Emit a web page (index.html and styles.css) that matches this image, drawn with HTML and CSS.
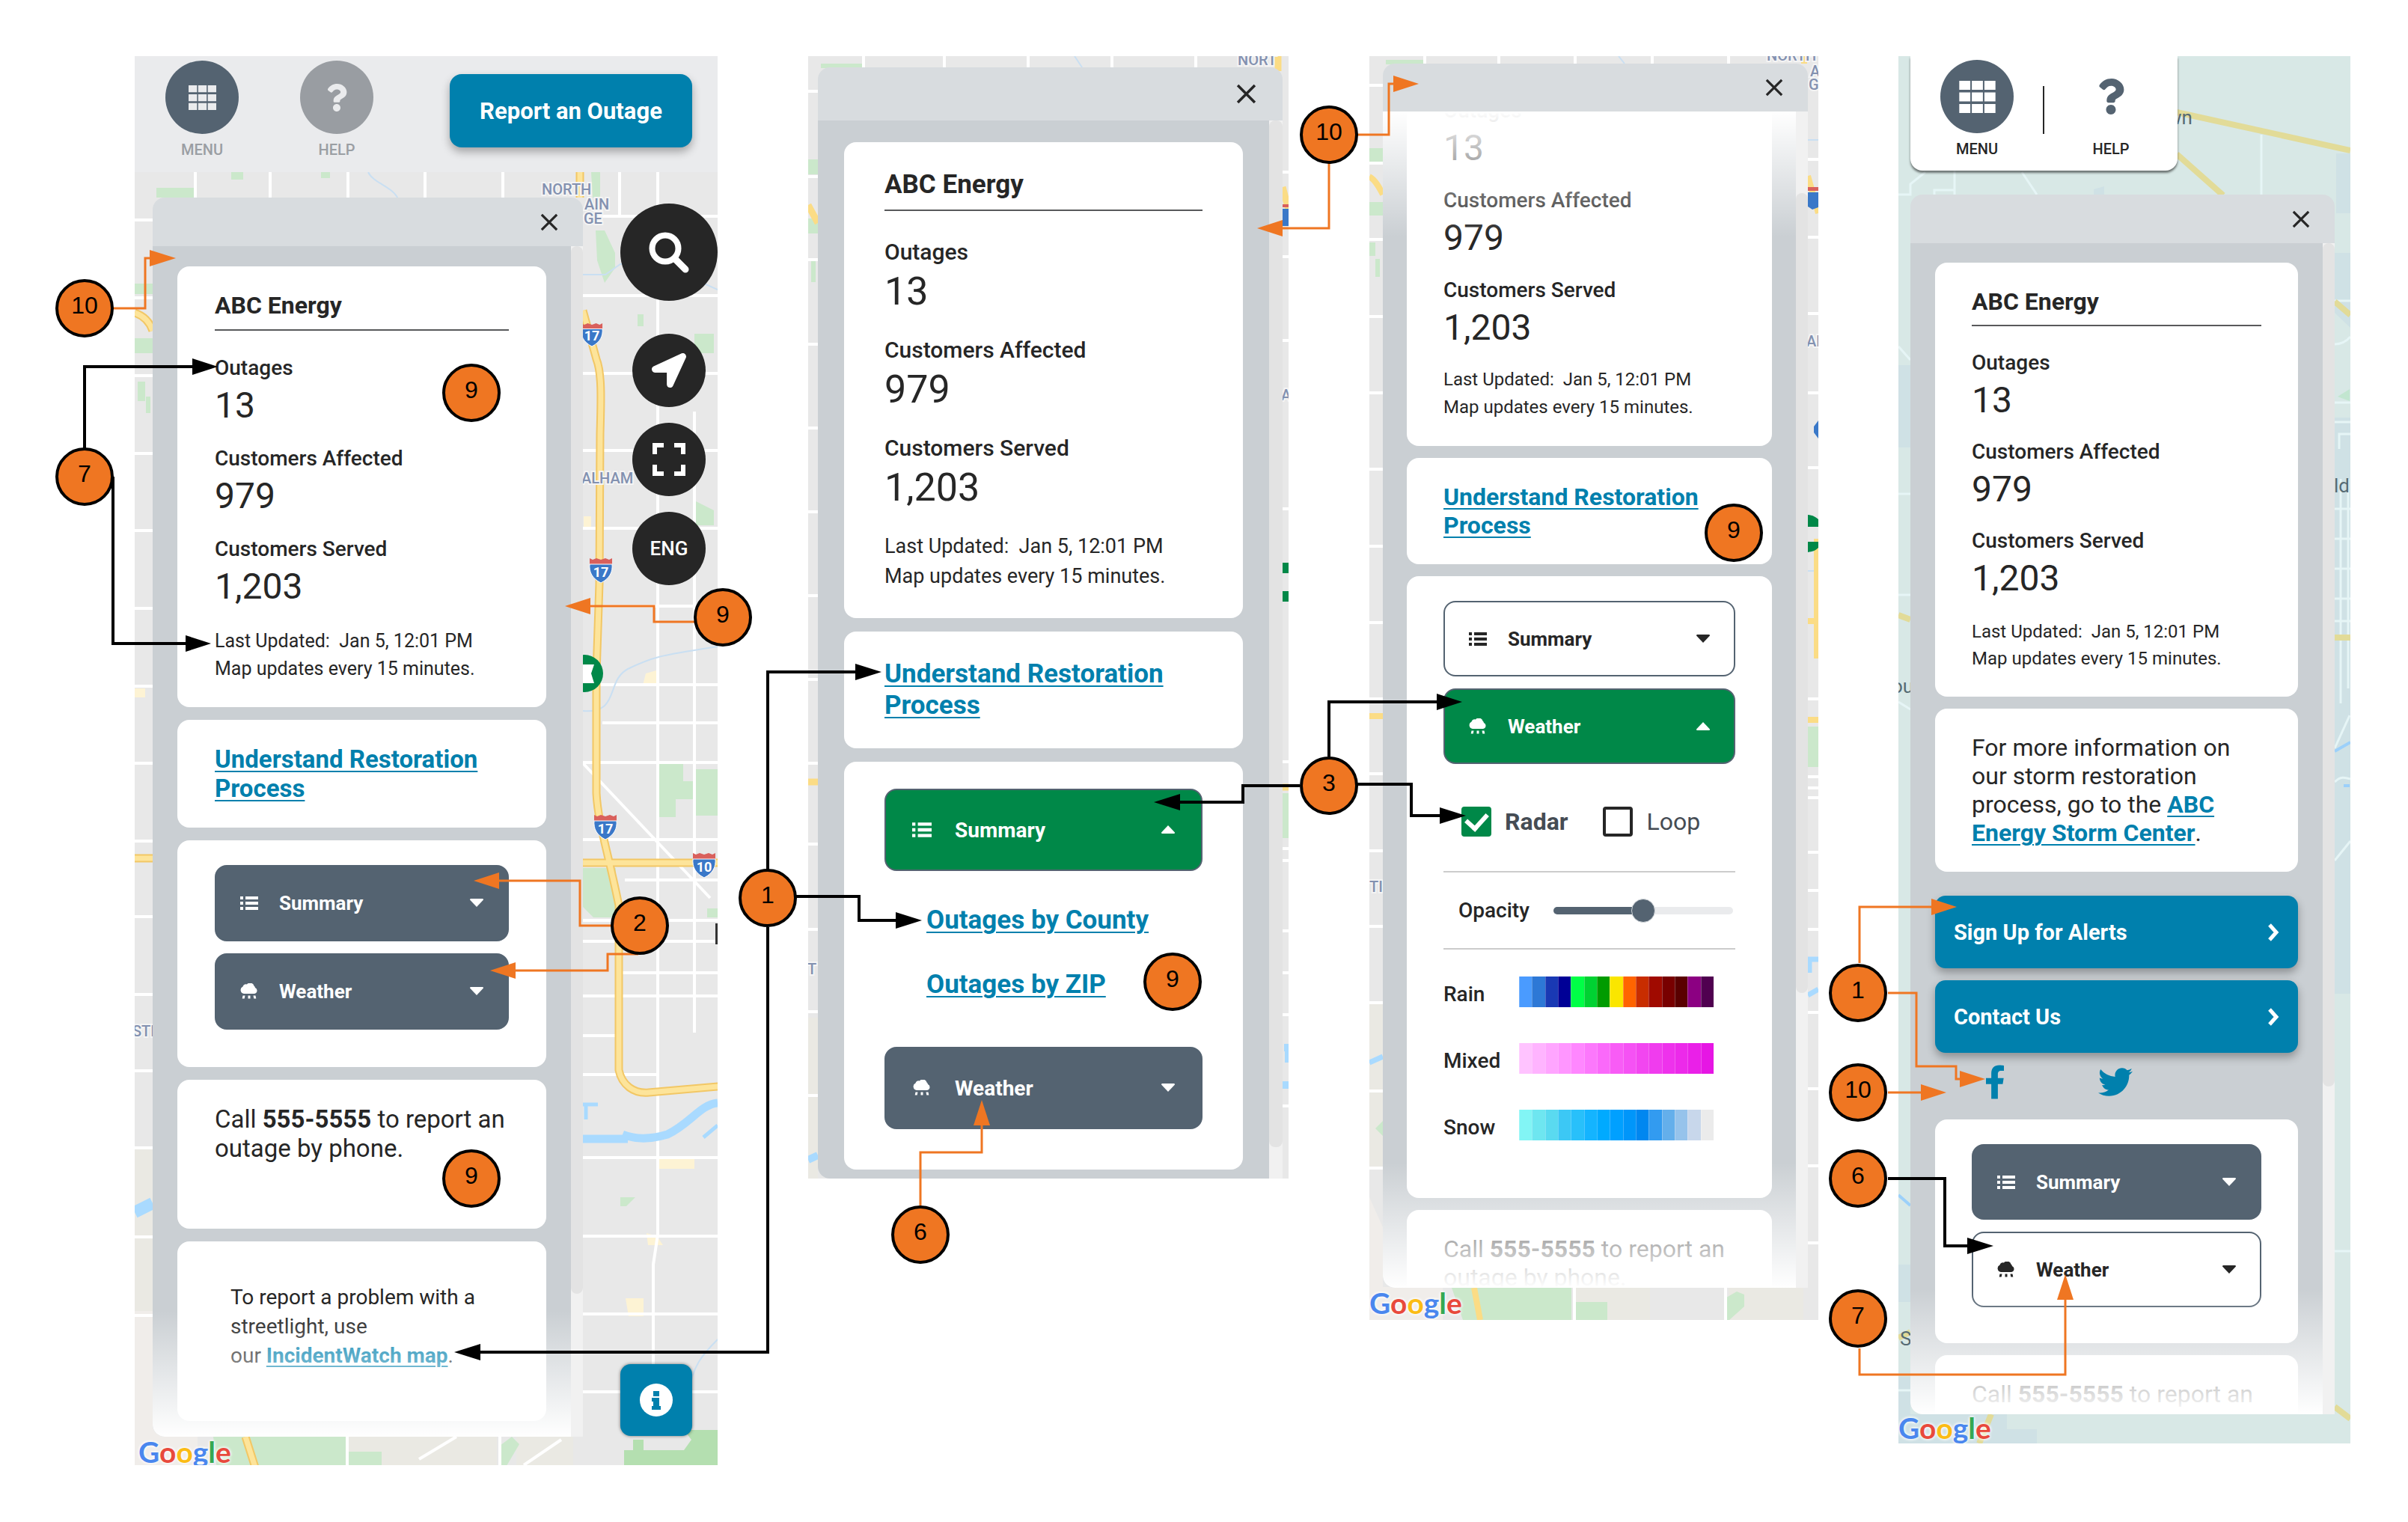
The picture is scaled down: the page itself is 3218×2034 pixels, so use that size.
FILE: index.html
```html
<!DOCTYPE html>
<html lang="en">
<head>
<meta charset="utf-8">
<meta name="viewport" content="width=device-width, initial-scale=1">
<title>Outage Map Menu Style Guide</title>
<link rel="stylesheet" href="styles.css">
</head>
<body>
<svg class="sprite" aria-hidden="true">
  <symbol id="i-grid" viewBox="0 0 36 32"><path d="M0 0h11v9H0zM12.500 0h11v9h-11zM25 0h11v9H25zM0 11.500h11v9H0zM12.500 11.500h11v9h-11zM25 11.500h11v9H25zM0 23h11v9H0zM12.500 23h11v9h-11zM25 23h11v9H25z"/></symbol>
  <symbol id="i-question" viewBox="0 0 384 512"><path d="M202.021 0C122.202 0 70.503 32.703 29.914 91.026c-7.363 10.58-5.093 25.086 5.178 32.874l43.138 32.709c10.373 7.865 25.132 6.026 33.253-4.148 25.049-31.381 43.63-49.449 82.757-49.449 30.764 0 68.816 19.799 68.816 49.631 0 22.552-18.617 34.134-48.993 51.164-35.423 19.86-82.299 44.576-82.299 106.405V320c0 13.255 10.745 24 24 24h72.471c13.255 0 24-10.745 24-24v-5.773c0-42.86 125.268-44.645 125.268-160.627C377.504 66.256 286.902 0 202.021 0zM192 373.459c-38.196 0-69.271 31.075-69.271 69.271 0 38.195 31.075 69.27 69.271 69.27s69.271-31.075 69.271-69.271-31.075-69.27-69.271-69.27z"/></symbol>
  <symbol id="i-close" viewBox="0 0 26 26"><path d="M2 2l22 22M24 2L2 24" fill="none" stroke="currentColor" stroke-width="3.400"/></symbol>
  <symbol id="i-search" viewBox="0 0 56 56"><circle cx="23" cy="23" r="17.500" fill="none" stroke="currentColor" stroke-width="8"/><path d="M36 37l14 14" fill="none" stroke="currentColor" stroke-width="9" stroke-linecap="round"/></symbol>
  <symbol id="i-arrow" viewBox="0 0 512 512"><path d="M444.52 3.52L28.74 195.42c-47.97 22.39-31.98 92.75 19.19 92.75h175.91v175.91c0 51.17 70.36 67.17 92.75 19.19l191.9-415.78c15.99-38.39-25.59-79.97-63.97-63.97z"/></symbol>
  <symbol id="i-expand" viewBox="0 0 44 44"><path d="M3 15V3h12M29 3h12v12M41 29v12H29M15 41H3V29" fill="none" stroke="currentColor" stroke-width="6"/></symbol>
  <symbol id="i-info" viewBox="0 0 44 44"><circle cx="22" cy="22" r="22"/><path d="M18 10h8v7h-8zM16 19h10v11h2v5H16v-5h2v-6h-2z" fill="#0080ad"/></symbol>
  <symbol id="i-list" viewBox="0 0 24 18"><path d="M0 0h4v4H0zM7 0h17v4H7zM0 7h4v4H0zM7 7h17v4H7zM0 14h4v4H0zM7 14h17v4H7z"/></symbol>
  <symbol id="i-rain" viewBox="0 0 24 22"><path d="M5 14a5 5 0 0 1-1.500-9.500A4.800 4.800 0 0 1 9 1.500a5.500 5.500 0 0 1 9.500 2A4.500 4.500 0 0 1 20 6a4.200 4.200 0 0 1-1 8z"/><path d="M3.500 16.500h3l-.8 4H2.700zM10.500 16.500h3v4h-3zM17.500 16.500h3l.8 4h-3z"/></symbol>
  <symbol id="i-down" viewBox="0 0 18 12"><path d="M0 1.500C0 .5.500 0 1.500 0h15c1 0 1.500.5 1.500 1.500L9 11z"/></symbol>
  <symbol id="i-up" viewBox="0 0 18 12"><path d="M0 9.500c0 1 .5 1.500 1.500 1.500h15c1 0 1.500-.5 1.500-1.500L9 0z"/></symbol>
  <symbol id="i-chevron" viewBox="0 0 16 26"><path d="M3 3l9 10-9 10" fill="none" stroke="currentColor" stroke-width="5"/></symbol>
  <symbol id="i-facebook" viewBox="0 0 320 512"><path d="M279.14 288l14.22-92.66h-88.91v-60.13c0-25.35 12.42-50.06 52.24-50.06h40.42V6.26S260.430 0 225.360 0c-73.22 0-121.08 44.38-121.08 124.72v70.62H22.89V288h81.39v224h100.17V288z"/></symbol>
  <symbol id="i-twitter" viewBox="0 0 512 512"><path d="M459.37 151.716c.325 4.548.325 9.097.325 13.645 0 138.72-105.583 298.558-298.558 298.558-59.452 0-114.68-17.219-161.137-47.106 8.447.974 16.568 1.299 25.34 1.299 49.055 0 94.213-16.568 130.274-44.832-46.132-.975-84.792-31.188-98.112-72.772 6.498.974 12.995 1.624 19.818 1.624 9.421 0 18.843-1.3 27.614-3.573-48.081-9.747-84.143-51.98-84.143-102.985v-1.299c13.969 7.797 30.214 12.67 47.431 13.319-28.264-18.843-46.781-51.005-46.781-87.391 0-19.492 5.197-37.36 14.294-52.954 51.655 63.675 129.3 105.258 216.365 109.807-1.624-7.797-2.599-15.918-2.599-24.04 0-57.828 46.782-104.934 104.934-104.934 30.213 0 57.502 12.67 76.67 33.137 23.715-4.548 46.456-13.32 66.599-25.34-7.798 24.366-24.366 44.833-46.132 57.827 21.117-2.273 41.584-8.122 60.426-16.243-14.292 20.791-32.161 39.308-52.628 54.253z"/></symbol>
  <symbol id="i-shield" viewBox="0 0 32 34"><path d="M1 1l4 2 5-2 6 2 6-2 5 2 4-2v8H1z" fill="#d9605c"/><path d="M1 9h30c1 10-3 19-15 25C4 28 0 19 1 9z" fill="#3a78c8" stroke="#fff" stroke-width="1"/></symbol>
</svg>

<main class="board">

  <!-- Default menu -->
  <section class="screen screen--default" aria-label="Menu, default state">
    <svg class="map" viewBox="180 75 779 1883" preserveAspectRatio="xMinYMin slice" aria-hidden="true">
      <rect x="180" y="75" width="779" height="1890" fill="#e8e8e8"/>
      <path d="M180 1534h24v310h60v120h-84z" fill="#f0edea"/>
      <path d="M180 1536h24v216h-24z" fill="#eae9e3"/>
      <path d="M464 1920h200v44H464zM690 1920h76v44h-76z" fill="#eae9e3"/>
      <path d="M209 251h52v13h-52zM309 230h16v10h-16zM429 230h12v8h-12zM180 452h24v20h-24zM180 379h24v14h-24zM184 510h10v26h-10zM195 530h6v22h-6zM285 1920h178v44H290zM464 1940h46v24h-46zM668 1964l0-32 16-12 10 10-20 34zM796 308l12 0 14 30 0 20-14 20-10-30zM852 420h8v16h-8zM928 446h26v26h-26zM930 670l24 12v20h-24zM879 1020h34v24h16v24h-26v24h-24zM930 1028h29v62h-29zM779 1160h44v66h-30l-14-14zM945 1214h14v12h-14zM790 230h12v34h-10zM829 1600h20l-12 12h-8z" fill="#cbe8cb"/>
      <path d="M914 1911h45v53H834v-26h12v-14h14v14h54l10-14z" fill="#b4dfb0"/>
      <path d="M863 900l14-4v20h-18zM836 1735h24v24h-20zM878 1546h50v16h-48zM864 1648l14 4 8 12h-20zM780 690h10v18h-10zM180 920h14v12h-14z" fill="#fdf3d4"/>
      <g fill="none" stroke="#fff" stroke-width="4">
        <path d="M261 230v34M361 230v34M465 230v34M568 230v34M672 230v34M828 230v60M879 230V1650l-6 40v140M928 550V1380M464 1920v44M668 1920v44"/>
        <path d="M779 289h180M779 395h180M779 499h180M779 602h180M779 706h180M779 810h180M779 915h180M805 966h154M779 1019h180M779 1122h180M835 1176h124M779 1230h180M779 1258h180M830 1300h129M779 1331h180M779 1384h50M779 1436h100M779 1547h180M779 1652h180M779 1756h180M779 1860h180"/>
        <path d="M180 294h24M180 398h24M180 502h24M180 606h24M180 709h24M180 813h24M180 917h24M180 1020h24M180 1124h24M180 1225h24M180 1329h24M180 1431h24M180 1534h24M180 1653h24M180 1758h24"/>
        <path d="M779 1020l170 180M560 1950l50-30M700 1958l50-34"/>
      </g>
      <g fill="none" stroke="#c9dff2" stroke-width="2">
        <path d="M492 230c6 14 34 20 40 36M779 367h30l20-14 50-2 80 36M779 950c50 4 30-40 60-56 40-20 60-20 120-30M959 1790c-20 20-34 36-38 70"/>
      </g>
      <g fill="none" stroke="#a9daff" stroke-width="11">
        <path d="M779 1522h60M832 1516c20 8 40 6 60 0 30-14 44-40 67-42"/><path d="M779 1476h20M783 1476v20M940 1520l19-16" stroke-width="5"/><path d="M180 1620l24-12" stroke-width="16"/>
      </g>
      <path d="M775 230v34M779 415l18 65c8 20 6 60 5 100l-1 200-4 120v160c2 40 16 80 30 150v220c4 20 20 32 40 30l93-8M779 1153h180M180 1147h24M328 1920l14 44M180 418c12 4 20 12 24 24" fill="none" stroke="#f2c765" stroke-width="11"/>
      <path d="M775 230v34M779 415l18 65c8 20 6 60 5 100l-1 200-4 120v160c2 40 16 80 30 150v220c4 20 20 32 40 30l93-8M779 1153h180M180 1147h24M328 1920l14 44M180 418c12 4 20 12 24 24" fill="none" stroke="#fde49a" stroke-width="7"/>
      <g class="map-label">
        <text x="724" y="260">NORTH</text><text x="781" y="280">AIN</text><text x="780" y="299">GE</text><text x="777" y="646">ALHAM</text><text x="177" y="1385">STI</text>
      </g>
      <g class="shield-label">
        <use href="#i-shield" x="776" y="430" width="30" height="34"/><text x="791" y="455">17</text>
        <use href="#i-shield" x="787" y="745" width="32" height="34"/><text x="803" y="771">17</text>
        <use href="#i-shield" x="793" y="1088" width="32" height="34"/><text x="809" y="1114">17</text>
        <use href="#i-shield" x="925" y="1139" width="32" height="34"/><text x="941" y="1165">10</text>
      </g>
      <circle cx="781" cy="900" r="25" fill="#008848"/><path d="M770 888h24l-4 12 4 13h-24z" fill="#fff"/>
      <path d="M956 1234h3v28h-3z" fill="#333"/>
    </svg>
    <nav class="topbar" aria-label="Main">
      <button class="nav-item"><span class="nav-disc"><svg width="37" height="33"><use href="#i-grid"/></svg></span>MENU</button>
      <button class="nav-item"><span class="nav-disc nav-disc--muted"><svg width="28" height="37"><use href="#i-question"/></svg></span>HELP</button>
      <button class="report">Report an Outage</button>
    </nav>
    <div class="stage">
      <section class="panel">
        <header class="panel-head"><button class="close" aria-label="Close"><svg><use href="#i-close"/></svg></button></header>
        <div class="panel-body">
          <div class="stack">
            <article class="card">
              <h2>ABC Energy</h2>
              <dl class="metrics">
                <div><dt>Outages</dt><dd>13</dd></div>
                <div><dt>Customers Affected</dt><dd>979</dd></div>
                <div><dt>Customers Served</dt><dd>1,203</dd></div>
              </dl>
              <p class="note">Last Updated:&nbsp; Jan 5, 12:01 PM<br>Map updates every 15 minutes.</p>
            </article>
            <article class="card"><p class="copy"><a href="#restoration">Understand Restoration Process</a></p></article>
            <article class="card accordion">
              <button class="toggle"><svg class="toggle-icon"><use href="#i-list"/></svg>Summary<svg class="caret"><use href="#i-down"/></svg></button>
              <button class="toggle"><svg class="toggle-icon"><use href="#i-rain"/></svg>Weather<svg class="caret"><use href="#i-down"/></svg></button>
            </article>
            <article class="card card--phone"><p class="copy">Call <b>555-5555</b> to report an outage by phone.</p></article>
            <article class="card card--light"><p class="small-copy">To report a problem with a streetlight, use<br>our <a href="#incident">IncidentWatch map</a>.</p></article>
          </div>
          <div class="track"><div class="thumb thumb--a"></div></div>
          <div class="fade fade--bottom"></div>
        </div>
      </section>
      <div class="controls">
        <button class="round round--big" aria-label="Search"><svg width="56" height="56"><use href="#i-search"/></svg></button>
        <button class="round" aria-label="My location"><svg width="46" height="46"><use href="#i-arrow"/></svg></button>
        <button class="round" aria-label="Full screen"><svg width="44" height="44"><use href="#i-expand"/></svg></button>
        <button class="round">ENG</button>
        <button class="info" aria-label="Information"><svg width="44" height="44"><use href="#i-info"/></svg></button>
      </div>
    </div>
    <footer class="credit"><span class="g-b">G</span><span class="g-r">o</span><span class="g-y">o</span><span class="g-b">g</span><span class="g-g">l</span><span class="g-r">e</span></footer>
  </section>

  <!-- Summary expanded -->
  <section class="screen screen--summary" aria-label="Menu, summary expanded">
    <svg class="map" viewBox="1080 75 642 1501" preserveAspectRatio="xMinYMin slice" aria-hidden="true">
      <rect x="1080" y="75" width="642" height="1510" fill="#e8e8e8"/>
      <path d="M1080 1360h13v224h-13z" fill="#eae9e3"/>
      <path d="M1097 85h56v6h-56zM1080 213h13v20h-13zM1080 292h13v20h-13zM1714 1060h8v60h-8zM1084 345h6v32h-6z" fill="#cbe8cb"/>
      <g fill="none" stroke="#fff" stroke-width="4"><path d="M1154 75v15M1262 75v15M1374 75v15M1486 75v15M1598 75v15M1080 122h13M1080 236h13M1080 347h13M1080 460h13M1080 572h13M1080 684h13M1080 796h13M1080 908h13M1080 1020h13M1080 1128h13M1080 1242h13M1080 1352h13M1080 1464h13M1714 230h8M1714 343h8M1714 455h8M1714 524h8M1714 680h8M1714 1018h8M1714 1134h8M1714 1150h8M1714 1244h8M1714 1300h8M1714 1356h8M1714 1478h8"/></g>
      <path d="M1436 75l10 15" stroke="#c9dff2" stroke-width="2"/>
      <path d="M1080 274l13 24M1080 1045h13M1708 75v20M1714 250l8 30M1714 1052h8" stroke="#fbdc85" stroke-width="9" fill="none"/>
      <path d="M1714 273h8v4h-8z" fill="#d9605c"/><path d="M1714 279h8v23h-8z" fill="#3a78c8"/>
      <path d="M1714 752h8v14h-8zM1714 790h8v14h-8z" fill="#008848"/>
      <path d="M1716 1400h6v20M1714 1450h8M1080 1550l13-6" stroke="#a9daff" stroke-width="10" fill="none"/>
      <g class="map-label"><text x="1654" y="87">NORT</text><text x="1712" y="535">A</text><text x="1079" y="1302">T</text></g>
    </svg>
    <section class="panel panel--large">
      <header class="panel-head"><button class="close" aria-label="Close"><svg><use href="#i-close"/></svg></button></header>
      <div class="panel-body">
        <div class="stack">
          <article class="card">
            <h2>ABC Energy</h2>
            <dl class="metrics">
              <div><dt>Outages</dt><dd>13</dd></div>
              <div><dt>Customers Affected</dt><dd>979</dd></div>
              <div><dt>Customers Served</dt><dd>1,203</dd></div>
            </dl>
            <p class="note">Last Updated:&nbsp; Jan 5, 12:01 PM<br>Map updates every 15 minutes.</p>
          </article>
          <article class="card"><p class="copy"><a href="#restoration">Understand Restoration Process</a></p></article>
          <article class="card accordion">
            <button class="toggle toggle--open"><svg class="toggle-icon"><use href="#i-list"/></svg>Summary<svg class="caret"><use href="#i-up"/></svg></button>
            <ul class="sublinks"><li><a href="#county">Outages by County</a></li><li><a href="#zip">Outages by ZIP</a></li></ul>
            <button class="toggle"><svg class="toggle-icon"><use href="#i-rain"/></svg>Weather<svg class="caret"><use href="#i-down"/></svg></button>
          </article>
        </div>
        <div class="track"><div class="thumb thumb--b"></div></div>
      </div>
    </section>
  </section>

  <!-- Weather expanded -->
  <section class="screen screen--weather" aria-label="Menu, weather expanded">
    <svg class="map" viewBox="1830 75 600 1689" preserveAspectRatio="xMinYMin slice" aria-hidden="true">
      <rect x="1830" y="75" width="600" height="1694" fill="#e8e8e8"/>
      <path d="M1830 1340h18v220h-18zM2105 1720h100v44h-100zM2310 1720h100v44h-100z" fill="#eae9e3"/>
      <path d="M1830 1600l18 40v80h80v44h-98z" fill="#f0edea"/>
      <path d="M1852 80h50v6h-50zM1830 198h18v18h-18zM1830 270h18v18h-18zM1830 324h8v18h-8zM1838 346h6v24h-6zM1940 1721h160v43H1955zM2105 1740h43v24h-43zM2307 1764v-30l14-8 10 4v16l-20 18zM2416 971h14v54h-14zM1838 1508l10-10v20z" fill="#cbe8cb"/>
      <g fill="none" stroke="#fff" stroke-width="4"><path d="M1904 75v10M2003 75v10M2105 75v10M2208 75v10M2310 75v10M2104 1721v43M2306 1721v43M1830 114h18M1830 218h18M1830 320h18M1830 423h18M1830 525h18M1830 627h18M1830 730h18M1830 832h18M1830 934h18M1830 1034h18M1830 1137h18M1830 1238h18M1830 1340h18M1830 1458h18M1830 1561h18M2416 213h14M2416 317h14M2416 419h14M2416 525h14M2416 625h14M2416 934h14M2416 1038h14M2416 1053h14M2416 1066h14M2416 1139h14M2416 1190h14M2416 1242h14M2416 1353h14M2416 1455h14M2416 1558h14M2416 1661h14"/></g>
      <path d="M2163 75l8 10M2416 187h14M2416 763h14" stroke="#c9dff2" stroke-width="2"/>
      <path d="M1830 236c8 4 14 16 18 24M1830 957h18M2411 75v10M2416 235l14 50M2416 830l12 0v50M2428 720v110M2416 962h14M1970 1721l8 43" stroke="#fbdc85" stroke-width="8" fill="none"/>
      <path d="M2416 250h14v5h-14z" fill="#d9605c"/><path d="M2416 257h14v20l-8 3-6-4z" fill="#3a78c8"/><path d="M2424 570l6-8v24l-6-8z" fill="#3a78c8"/>
      <path d="M2416 688c6 0 12 4 14 6v10h-14zM2416 724h14v8c-4 4-8 5-14 6z" fill="#008848"/>
      <path d="M2418 1300v-18h12M2416 1330l14-8M1830 1420l18-8" stroke="#a9daff" stroke-width="7" fill="none"/>
      <g class="map-label"><text x="2361" y="81">NORTH</text><text x="2419" y="102">A</text><text x="2417" y="120">G</text><text x="2414" y="463">AL</text><text x="1830" y="1192">TI</text></g>
    </svg>
    <section class="panel panel--weather">
      <header class="panel-head"><button class="close" aria-label="Close"><svg><use href="#i-close"/></svg></button></header>
      <div class="panel-body">
        <div class="stack">
          <article class="card">
            <dl class="metrics">
              <div><dt>Outages</dt><dd>13</dd></div>
              <div><dt>Customers Affected</dt><dd>979</dd></div>
              <div><dt>Customers Served</dt><dd>1,203</dd></div>
            </dl>
            <p class="note">Last Updated:&nbsp; Jan 5, 12:01 PM<br>Map updates every 15 minutes.</p>
          </article>
          <article class="card"><p class="copy"><a href="#restoration">Understand Restoration Process</a></p></article>
          <article class="card accordion accordion--weather">
            <button class="toggle toggle--outline"><svg class="toggle-icon"><use href="#i-list"/></svg>Summary<svg class="caret"><use href="#i-down"/></svg></button>
            <button class="toggle toggle--open"><svg class="toggle-icon"><use href="#i-rain"/></svg>Weather<svg class="caret"><use href="#i-up"/></svg></button>
            <div class="checks">
              <label class="check check--on"><input type="checkbox" checked>Radar</label>
              <label class="check"><input type="checkbox">Loop</label>
            </div>
            <div class="opacity"><label for="opacity">Opacity</label><input id="opacity" type="range" min="0" max="100" value="50"></div>
            <dl class="legend">
              <div><dt>Rain</dt><dd><i style="background:#4a9bff"></i><i style="background:#2d78d6"></i><i style="background:#1939b4"></i><i style="background:#000096"></i><i style="background:#00ff46"></i><i style="background:#00d232"></i><i style="background:#009b00"></i><i style="background:#fae600"></i><i style="background:#ff6400"></i><i style="background:#c82d00"></i><i style="background:#a00a00"></i><i style="background:#780000"></i><i style="background:#5a0000"></i><i style="background:#8c0082"></i><i style="background:#500050"></i></dd></div>
              <div><dt>Mixed</dt><dd><i style="background:#ffc3ff"></i><i style="background:#ffb4ff"></i><i style="background:#ffa5ff"></i><i style="background:#ff96ff"></i><i style="background:#ff87ff"></i><i style="background:#fc78fc"></i><i style="background:#fa69fa"></i><i style="background:#f85cf6"></i><i style="background:#f552f4"></i><i style="background:#f246f0"></i><i style="background:#f03cee"></i><i style="background:#ee32ec"></i><i style="background:#ec2aea"></i><i style="background:#ea20e8"></i><i style="background:#e616e4"></i></dd></div>
              <div><dt>Snow</dt><dd><i style="background:#82f5f5"></i><i style="background:#6ee6f0"></i><i style="background:#5adaf0"></i><i style="background:#3cc8f5"></i><i style="background:#28c0fa"></i><i style="background:#14b4ff"></i><i style="background:#00aaff"></i><i style="background:#00a0ff"></i><i style="background:#0096fa"></i><i style="background:#0087f0"></i><i style="background:#329bf0"></i><i style="background:#64afeb"></i><i style="background:#96c3eb"></i><i style="background:#c8d7eb"></i><i style="background:#ebebeb"></i></dd></div>
            </dl>
          </article>
          <article class="card card--phone"><p class="copy">Call <b>555-5555</b> to report an outage by phone.</p></article>
        </div>
        <div class="track"><div class="thumb thumb--c"></div></div>
        <div class="fade fade--top"></div>
        <div class="fade fade--bottom"></div>
      </div>
    </section>
    <footer class="credit credit--flush"><span class="g-b">G</span><span class="g-r">o</span><span class="g-y">o</span><span class="g-b">g</span><span class="g-g">l</span><span class="g-r">e</span></footer>
  </section>

  <!-- Alerts and contact -->
  <section class="screen screen--alerts" aria-label="Menu, with alerts and contact buttons">
    <svg class="map" viewBox="2537 75 604 1854" preserveAspectRatio="xMinYMin slice" aria-hidden="true">
      <rect x="2537" y="75" width="604" height="1860" fill="#d8e8e6"/>
      <path d="M2537 488h16v110h-16zM3122 205h19v80h-19zM3120 338h21v100l-21-20zM3120 558h21v770h-21zM2798 253l14-4v12h-14zM2537 1690h16v50h-16zM2537 1840h16v50h75v39h-91zM2682 1890v20h40v19h-94v-39z" fill="#cfe1e5"/>
      <path d="M3124 530l16-10v16z" fill="#c2e6d0"/>
      <g fill="none" stroke="#e6f5f6" stroke-width="3"><path d="M2537 260h16l0-14 20-16M2612 228v32M2585 260v-6h26M2702 230l20 30M3022 180v80M3120 402h21M3120 538h21M3120 460c10 0 16-4 21-10M2537 463l16 18M2537 660h16M2537 795h16M3120 680h21M3120 720h21M3120 760h21M3120 800h21M3120 830h21M3128 640v300M3138 640v280M2537 938l16 10M3120 1000l20-44M3120 1045c8-8 14-6 21-4M3120 1150l21-26M3120 564h21M3126 600v-20h15M3120 1672h21M2537 1858h16"/></g>
      <g fill="none" stroke="#e2db98" stroke-width="8"><path d="M2909 150l232 51M2909 206l62 55M3120 403l21 18M2537 822l16 6M3120 852h21M2537 1788l16-8M2661 1890l-16 39M3120 1880l21 16"/></g>
      <g fill="none" stroke="#9cd0fa" stroke-width="4"><path d="M3120 1004l21-12M3132 1050l8 0M2537 1597l16 14"/></g>
      <g class="place-label"><text x="2896" y="166">wn</text><text x="3119" y="658">ld</text><text x="2528" y="926">ou</text><text x="2539" y="1798">S</text></g>
    </svg>
    <nav class="menu-card" aria-label="Main">
      <button class="nav-item nav-item--dark"><span class="nav-disc"><svg width="49" height="43"><use href="#i-grid"/></svg></span>MENU</button>
      <button class="nav-item nav-item--dark"><span class="nav-disc nav-disc--plain"><svg width="36" height="48"><use href="#i-question"/></svg></span>HELP</button>
    </nav>
    <section class="panel panel--alerts">
      <header class="panel-head"><button class="close" aria-label="Close"><svg><use href="#i-close"/></svg></button></header>
      <div class="panel-body">
        <div class="stack">
          <article class="card">
            <h2>ABC Energy</h2>
            <dl class="metrics">
              <div><dt>Outages</dt><dd>13</dd></div>
              <div><dt>Customers Affected</dt><dd>979</dd></div>
              <div><dt>Customers Served</dt><dd>1,203</dd></div>
            </dl>
            <p class="note">Last Updated:&nbsp; Jan 5, 12:01 PM<br>Map updates every 15 minutes.</p>
          </article>
          <article class="card"><p class="copy">For more information on our storm restoration process, go to the <a href="#storm">ABC Energy Storm Center</a>.</p></article>
          <div class="actions">
            <button class="action">Sign Up for Alerts<svg width="16" height="26"><use href="#i-chevron"/></svg></button>
            <button class="action">Contact Us<svg width="16" height="26"><use href="#i-chevron"/></svg></button>
            <div class="social">
              <a href="#facebook" aria-label="Facebook"><svg width="28" height="46"><use href="#i-facebook"/></svg></a>
              <a href="#twitter" aria-label="Twitter"><svg width="46" height="46"><use href="#i-twitter"/></svg></a>
            </div>
          </div>
          <article class="card accordion">
            <button class="toggle"><svg class="toggle-icon"><use href="#i-list"/></svg>Summary<svg class="caret"><use href="#i-down"/></svg></button>
            <button class="toggle toggle--outline"><svg class="toggle-icon"><use href="#i-rain"/></svg>Weather<svg class="caret"><use href="#i-down"/></svg></button>
          </article>
          <article class="card card--phone"><p class="copy">Call <b>555-5555</b> to report an</p></article>
        </div>
        <div class="track"><div class="thumb thumb--d"></div></div>
        <div class="fade fade--bottom"></div>
      </div>
    </section>
    <footer class="credit credit--flush"><span class="g-b">G</span><span class="g-r">o</span><span class="g-y">o</span><span class="g-b">g</span><span class="g-g">l</span><span class="g-r">e</span></footer>
  </section>

  <!-- Numbered callouts and connectors -->
  <svg class="callouts" viewBox="0 0 3218 2034" role="img" aria-label="Numbered callouts">
    <g class="wire wire--orange">
      <path d="M150 412h44v-67h8"/><path d="M928 831h-54v-21h-88"/><path d="M816 1237h-41v-60H665"/><path d="M853 1275h-41v22H687"/>
      <path d="M1230 1611v-71h82v-38"/><path d="M1814 180h42v-68h8"/><path d="M1776 218v87h-64"/>
      <path d="M2485 1287v-75h99"/><path d="M2523 1327h38v98h53v17h6"/><path d="M2523 1460h46"/><path d="M2485 1802v35h275v-103"/>
    </g>
    <g class="wire wire--black">
      <path d="M113 600V490h146"/><path d="M151 637v223h99"/><path d="M1026 1162V898h120"/><path d="M1064 1198h84v32h52"/><path d="M1026 1239v568H641"/>
      <path d="M1737 1050h-76v22h-86"/><path d="M1776 1011v-73h146"/><path d="M1814 1048h72v42h40"/><path d="M2523 1575h76v90h32"/>
    </g>
    <g class="tip tip--orange">
      <path d="M235 345l-35-11v22z"/><path d="M755 810l34-11v22z"/><path d="M633 1177l34-11v22z"/><path d="M655 1297l34-11v22z"/><path d="M1312 1470l-11 34h22z"/><path d="M1896 112l-34-11v22z"/><path d="M1680 305l34-11v22z"/><path d="M2615 1212l-34-11v22z"/><path d="M2653 1442l-34-11v22z"/><path d="M2601 1460l-34-11v22z"/><path d="M2760 1703l-11 34h22z"/>
    </g>
    <g class="tip tip--black">
      <path d="M291 490l-34-11v22z"/><path d="M282 860l-34-11v22z"/><path d="M1178 898l-35-11v22z"/><path d="M1232 1230l-35-11v22z"/><path d="M607 1807l35-11v22z"/><path d="M1542 1072l35-11v22z"/><path d="M1954 938l-34-11v22z"/><path d="M1959 1090l-35-11v22z"/><path d="M2664 1665l-35-11v22z"/>
    </g>
    <g class="badge">
      <circle cx="113" cy="412" r="37"/><text x="113" y="419">10</text>
      <circle cx="113" cy="637" r="37"/><text x="113" y="644">7</text>
      <circle cx="630" cy="525" r="37"/><text x="630" y="532">9</text>
      <circle cx="966" cy="825" r="37"/><text x="966" y="832">9</text>
      <circle cx="855" cy="1237" r="37"/><text x="855" y="1244">2</text>
      <circle cx="630" cy="1575" r="37"/><text x="630" y="1582">9</text>
      <circle cx="1026" cy="1200" r="37"/><text x="1026" y="1207">1</text>
      <circle cx="1567" cy="1312" r="37"/><text x="1567" y="1319">9</text>
      <circle cx="1230" cy="1650" r="37"/><text x="1230" y="1657">6</text>
      <circle cx="1776" cy="180" r="37"/><text x="1776" y="187">10</text>
      <circle cx="1776" cy="1050" r="37"/><text x="1776" y="1057">3</text>
      <circle cx="2317" cy="712" r="37"/><text x="2317" y="719">9</text>
      <circle cx="2483" cy="1327" r="37"/><text x="2483" y="1334">1</text>
      <circle cx="2483" cy="1460" r="37"/><text x="2483" y="1467">10</text>
      <circle cx="2483" cy="1575" r="37"/><text x="2483" y="1582">6</text>
      <circle cx="2483" cy="1762" r="37"/><text x="2483" y="1769">7</text>
    </g>
  </svg>
</main>
</body>
</html>
```
FILE: styles.css
```css
* { box-sizing: border-box; margin: 0; padding: 0; }

:root {
  --slate: #546371;
  --blue: #0080ad;
  --green: #008848;
  --ink: #262626;
  --orange: #ef7622;
}

body { background: #fff; color: var(--ink); font-family: Roboto, "Liberation Sans", sans-serif; }
button { border: 0; background: none; font: inherit; color: inherit; cursor: pointer; }
svg { fill: currentColor; display: block; flex: none; }
ul { list-style: none; }
a { color: var(--blue); font-weight: 700; text-decoration-thickness: 2px; text-underline-offset: 4px; }
.sprite { position: absolute; width: 0; height: 0; }

/* Board: four screens side by side, widths in proportion */
.board {
  position: relative;
  display: grid;
  grid-template-columns: 180fr 779fr 121fr 642fr 108fr 600fr 107fr 604fr 77fr;
  align-items: start;
  padding: 75px 0 75px;
}
.screen { position: relative; overflow: hidden; min-width: 0; }
.screen--default { grid-column: 2; }
.screen--summary { grid-column: 4; padding: 15px 8px 0 13px; }
.screen--weather { grid-column: 6; padding: 10px 14px 0 18px; }
.screen--alerts { grid-column: 8; padding: 0 21px 0 16px; }

.map { position: absolute; inset: 0; width: 100%; height: 100%; }
.map-label text { font-size: 20px; font-weight: 500; fill: #8391b0; stroke: #f4f4f4; stroke-width: 4px; paint-order: stroke; }
.place-label text { font-size: 26px; fill: #566b74; }
.shield-label text { font-size: 18px; font-weight: 700; fill: #fff; text-anchor: middle; }

/* Navigation */
.topbar { position: relative; display: flex; align-items: flex-start; height: 155px; padding: 6px 34px 0 41px; background: #eaebed; }
.nav-item { display: flex; flex-direction: column; align-items: center; gap: 10px; width: 98px; margin-right: 82px; font-size: 20px; line-height: 22px; font-weight: 500; color: #9a9ea3; }
.nav-item--dark { margin: 0; color: var(--ink); }
.nav-disc { display: grid; place-items: center; width: 98px; height: 98px; border-radius: 50%; background: var(--slate); color: #fff; }
.topbar .nav-disc { color: #eaebed; }
.nav-disc--muted { background: #999da2; }
.nav-disc--plain { background: none; color: var(--slate); }
.report { flex: 1; height: 98px; margin: 18px 0 0 20px; border-radius: 16px; background: var(--blue); color: #fff; font-size: 31px; font-weight: 700; white-space: nowrap; box-shadow: 0 6px 12px rgba(0, 0, 0, .3); }

.menu-card { position: relative; display: flex; justify-content: space-between; width: 357px; margin-bottom: 32px; padding: 5px 40px 18px 40px; border-radius: 0 0 16px 16px; background: #fff; box-shadow: 0 3px 3px rgba(0, 0, 0, .5); }
.menu-card::after { content: ""; position: absolute; left: 177px; top: 40px; width: 2px; height: 64px; background: var(--ink); }

.stage { position: relative; display: flex; margin: 34px 0 0 24px; }
.stage .panel { flex: 1; }
.controls { display: flex; flex-direction: column; align-items: center; gap: 21px; width: 130px; margin-left: 50px; padding: 8px 0 1px; }
.round { display: grid; place-items: center; width: 98px; height: 98px; border-radius: 50%; background: var(--ink); color: #fff; font-size: 26px; font-weight: 500; }
.round--big { width: 130px; height: 130px; margin-bottom: 23px; }
.info { display: grid; place-items: center; width: 96px; height: 96px; margin-top: auto; align-self: flex-start; border-radius: 14px; background: var(--blue); color: #fff; box-shadow: 0 0 4px rgba(0, 0, 0, .5); }

/* Menu panel */
.panel {
  --title: 32px; --title-line: 39px;
  --label: 28px; --label-line: 36px;
  --number: 48px; --number-line: 56px;
  --note: 25px; --note-line: 37px; --note-gap: 26px;
  --copy: 33px; --copy-line: 39px;
  --toggle: 26px; --toggle-height: 102px; --toggle-pad: 32px; --icon: 24px; --icon-gap: 28px;
  --head: 65px; --top: 27px; --side: 33px; --inset: 50px; --pad: 33px;
  --gap: 17px; --metric-gap: 25px; --rule-gap: 32px; --track: 16px;
  --close: 24px; --close-right: 33px;
  position: relative;
  min-width: 0;
}
.panel--large {
  --title: 35px; --title-line: 42px;
  --label: 30px; --label-line: 39px;
  --number: 52px; --number-line: 60px;
  --note: 27px; --note-line: 40px; --note-gap: 28px;
  --copy: 35px; --copy-line: 42px;
  --toggle: 28px; --toggle-height: 110px; --toggle-pad: 35px; --icon: 26px; --icon-gap: 31px;
  --head: 71px; --top: 29px; --side: 35px; --inset: 54px; --pad: 36px;
  --gap: 18px; --metric-gap: 28px; --rule-gap: 35px; --track: 18px;
  --close: 27px; --close-right: 35px;
}
.panel--weather { --head: 64px; --top: 0px; --side: 32px; --inset: 49px; --copy: 32px; --copy-line: 38px; --note: 24px; --note-gap: 23px; --gap: 16px; --metric-gap: 24px; --toggle-height: 101px; }
.panel--alerts { --title-line: 38px; --top: 26px; --inset: 49px; --copy: 32px; --copy-line: 38px; --note: 24px; --note-line: 36px; --note-gap: 25px; --gap: 16px; --metric-gap: 23px; --rule-gap: 31px; --toggle-height: 101px; }

.panel-head { display: flex; justify-content: flex-end; align-items: center; height: var(--head); padding-right: var(--close-right); border-radius: 16px 16px 0 0; background: #d8dcdf; }
.close svg { width: var(--close); height: var(--close); }
.panel-body { position: relative; display: flex; overflow: hidden; border-bottom-left-radius: 16px; }
.screen--weather .panel-body { height: 1572px; }
.screen--alerts .panel-body { height: 1565px; }
.stack { flex: 1; min-width: 0; display: flex; flex-direction: column; gap: var(--gap); padding: var(--top) var(--side) 21px; background: #cacfd3; }
.panel--large .stack { padding-bottom: 12px; }
.panel--weather .stack { margin-top: -19px; }
.track { width: var(--track); background: #f1f1f1; }
.thumb { border-radius: 8px; background: #e3e3e3; }
.thumb--a { height: 88%; }
.thumb--b { height: 97%; }
.thumb--c { height: 68%; margin-top: 109px; }
.thumb--d { height: 72%; }

.fade { position: absolute; left: 0; right: var(--track); height: 168px; pointer-events: none; }
.fade--bottom { bottom: 0; background: linear-gradient(rgba(255, 255, 255, 0), #fff); }
.fade--top { top: 0; background: linear-gradient(#fff, rgba(255, 255, 255, 0)); }

.card { padding: var(--pad) var(--inset); border-radius: 16px; background: #fff; }
.panel--weather .card:first-child { padding-top: 0; border-radius: 0 0 16px 16px; }
.card h2 { padding-bottom: 12px; border-bottom: 2px solid #58595b; font-size: var(--title); line-height: var(--title-line); font-weight: 700; margin-bottom: var(--rule-gap); }
.metrics { display: flex; flex-direction: column; gap: var(--metric-gap); }
.metrics dt { font-size: var(--label); line-height: var(--label-line); font-weight: 500; margin-bottom: 4px; }
.metrics dd { font-size: var(--number); line-height: var(--number-line); }
.note { margin-top: var(--note-gap); font-size: var(--note); line-height: var(--note-line); white-space: nowrap; }
.copy { font-size: var(--copy); line-height: var(--copy-line); margin-right: -12px; }
.card--phone { padding-bottom: 88px; }
.card--light { padding: 55px 50px 68px 71px; }
.small-copy { font-size: 28px; line-height: 39px; }

.accordion { display: flex; flex-direction: column; gap: 16px; padding-bottom: 50px; }
.panel--large .accordion { gap: 0; padding-bottom: 54px; }
.toggle { display: flex; align-items: center; width: 100%; height: var(--toggle-height); padding: 0 var(--toggle-pad); border: 2px solid var(--slate); border-radius: 16px; background: var(--slate); color: #fff; font-size: var(--toggle); font-weight: 700; }
.toggle--open { background: var(--green); }
.toggle--outline { background: #fff; color: var(--ink); }
.toggle-icon { width: var(--icon); height: 22px; margin-right: var(--icon-gap); }
.caret { width: 18px; height: 12px; margin-left: auto; }
.sublinks { display: flex; flex-direction: column; gap: 44px; padding: 45px 0 62px 56px; font-size: var(--copy); line-height: var(--copy-line); }

/* Weather controls */
.panel--weather .accordion--weather { padding-bottom: 76px; }
.checks { display: flex; gap: 47px; padding: 41px 0 30px 24px; }
.check { display: flex; align-items: center; gap: 18px; font-size: 32px; line-height: 40px; color: #454c54; }
.check--on { font-weight: 700; }
.check input { appearance: none; width: 40px; height: 40px; border: 4px solid var(--ink); border-radius: 4px; background: #fff; }
.check input:checked { border-color: var(--green); background: var(--green); display: grid; place-items: center; }
.check input:checked::after { content: ""; width: 13px; height: 22px; margin: -6px 0 0 0; border: solid #fff; border-width: 0 6px 6px 0; transform: rotate(42deg); }
.opacity { display: flex; align-items: center; justify-content: space-between; height: 105px; padding: 0 3px 0 20px; border: solid #ccc; border-width: 2px 0; font-size: 28px; font-weight: 500; }
.opacity input { appearance: none; width: 240px; height: 10px; border-radius: 5px; background: linear-gradient(to right, var(--slate) 50%, #eaebed 50%); }
.opacity input::-webkit-slider-thumb { appearance: none; width: 32px; height: 32px; border: 1px solid #cfd4d8; border-radius: 50%; background: var(--slate); }
.legend { display: flex; flex-direction: column; gap: 47px; padding-top: 20px; }
.legend div { display: flex; }
.legend dt { width: 101px; padding-top: 6px; font-size: 28px; line-height: 36px; font-weight: 500; }
.legend dd { display: flex; width: 260px; height: 41px; }
.legend i { flex: 1; box-shadow: inset 1px 0 rgba(255, 255, 255, .25); }

/* Blue actions */
.actions { display: flex; flex-direction: column; gap: 16px; padding: 16px 0 11px; }
.action { display: flex; align-items: center; justify-content: space-between; height: 97px; padding: 0 25px; border-radius: 14px; background: var(--blue); color: #fff; font-size: 29px; font-weight: 700; box-shadow: 0 6px 12px rgba(0, 0, 0, .3); }
.social { display: flex; gap: 124px; padding-left: 66px; }
.panel--alerts .accordion { padding-bottom: 48px; }

/* Map credit */
.credit { position: relative; height: 38px; padding-left: 5px; overflow: hidden; font-family: Lato, Roboto, sans-serif; font-size: 39px; line-height: 40px; font-weight: 700; text-shadow: 0 0 4px #fff, 0 0 4px #fff; }
.credit--flush { height: 43px; padding: 0; margin-left: -18px; }
.screen--alerts .credit { height: 39px; line-height: 37px; margin-left: -16px; }
.g-b { color: #4a87ee; }
.g-r { color: #e8493c; }
.g-y { color: #fbbc15; }
.g-g { color: #35a853; }

/* Callouts */
.callouts { position: absolute; top: 0; left: 0; width: 100%; pointer-events: none; }
.wire { fill: none; stroke-width: 4px; }
.wire--orange { stroke: var(--orange); stroke-width: 3px; }
.wire--black { stroke: #000; }
.tip--orange { fill: var(--orange); }
.tip--black { fill: #000; }
.badge circle { fill: var(--orange); stroke: #000; stroke-width: 4px; }
.badge text { fill: #000; font-family: "Liberation Sans", Arial, sans-serif; font-size: 32px; text-anchor: middle; }
```
